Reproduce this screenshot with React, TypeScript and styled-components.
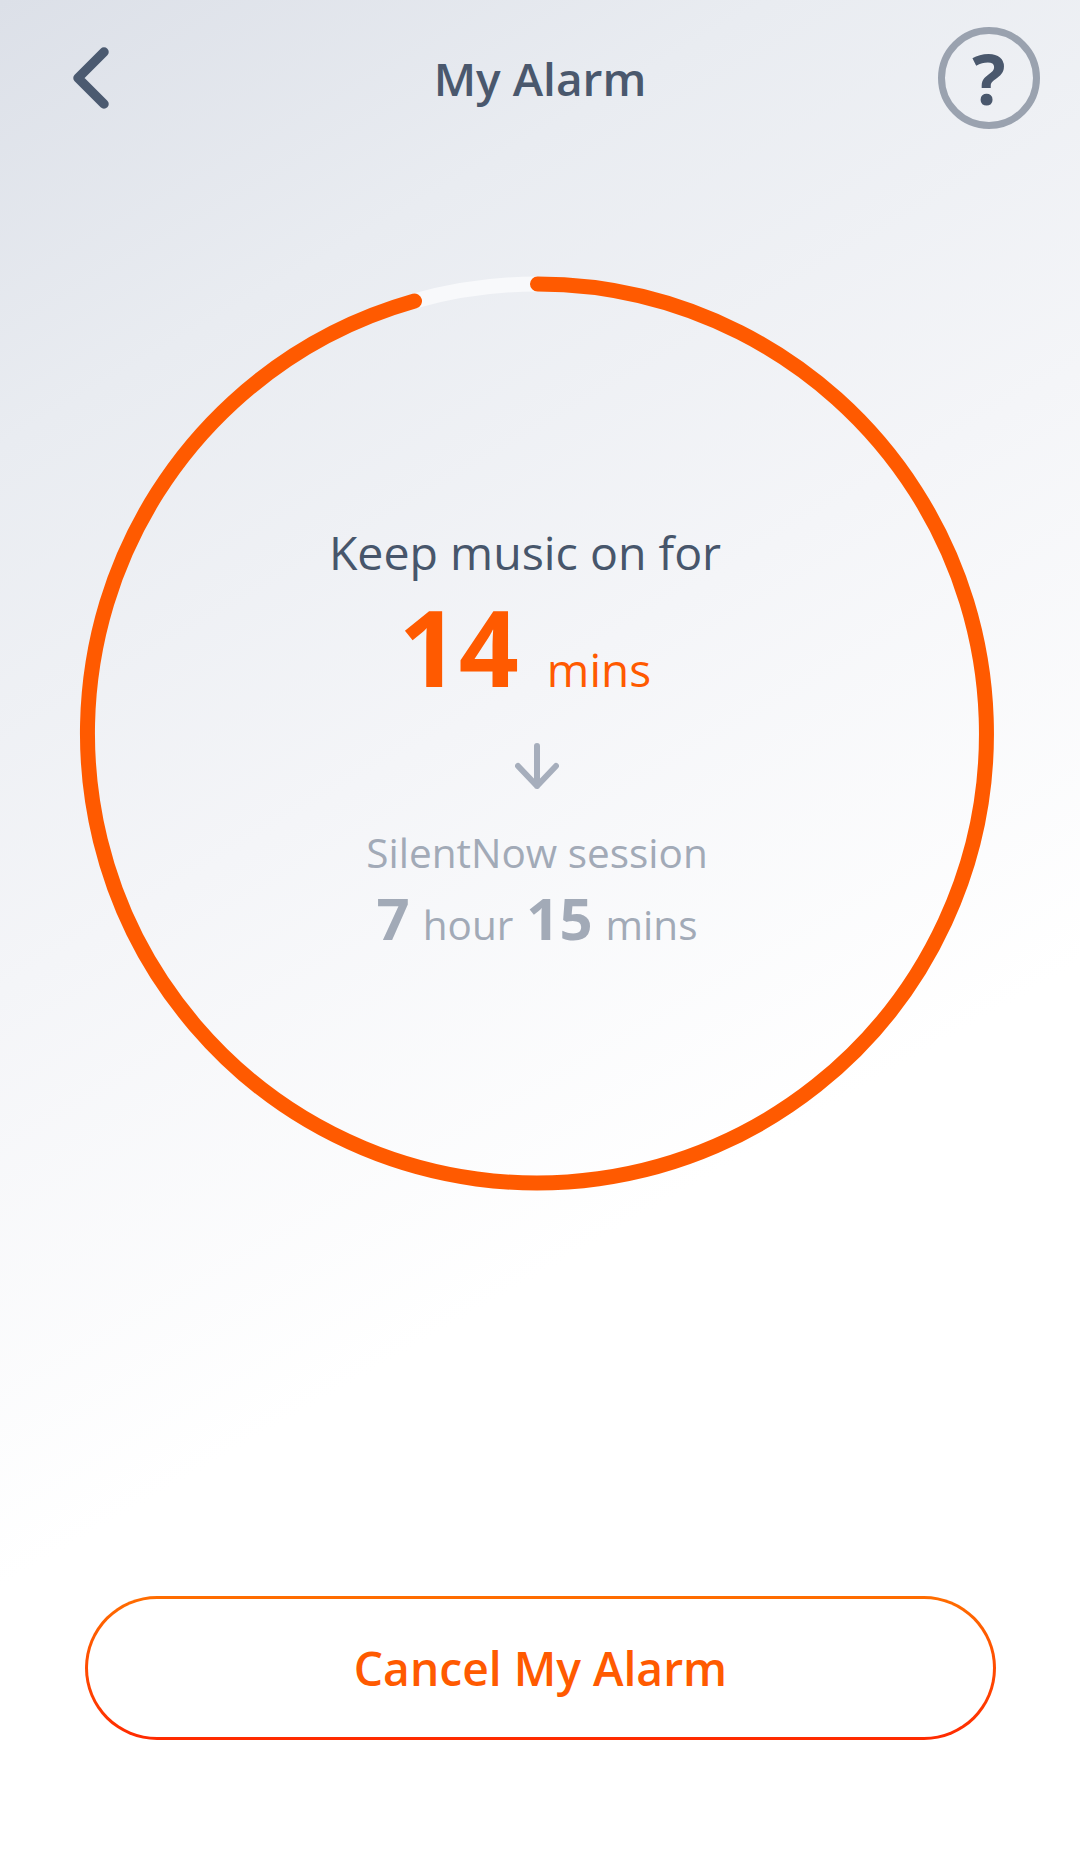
import React from "react";
import styled, { createGlobalStyle } from "styled-components";

const Global = createGlobalStyle`
  html, body { margin: 0; padding: 0; background: #fff; }
  #root { width: 1080px; }
`;

const Page = styled.div`
  width: 1080px;
  height: 1856px;
  box-sizing: border-box;
  overflow: hidden;
  font-family: "Open Sans", "Noto Sans", sans-serif;
  background: linear-gradient(150deg, #dce0e8 0%, #e9ecf1 18%, #f4f5f8 40%, #ffffff 64%);
`;

const Header = styled.header`
  display: grid;
  grid-template-columns: 1fr auto 1fr;
  align-items: center;
  padding: 27px 40px 0 72px;
  height: 102px;
`;

const BackButton = styled.div`
  justify-self: start;
  width: 38px;
  height: 62px;
  color: #4b5a70;
`;

const Title = styled.h1`
  margin: 0 32px 0 0;
  font-size: 46px;
  line-height: 60px;
  font-weight: 600;
  color: #4a586d;
`;

const HelpButton = styled.div`
  justify-self: end;
  width: 102px;
  height: 102px;
  box-sizing: border-box;
  border: 7px solid #9aa2af;
  border-radius: 50%;
  display: flex;
  align-items: center;
  justify-content: center;
  font-size: 70px;
  line-height: 1;
  font-weight: 700;
  color: #4a586d;
`;

const RingArea = styled.section`
  display: grid;
  width: 920px;
  height: 920px;
  margin: 144px 0 0 77px;
`;

const RingArt = styled.svg`
  grid-area: 1 / 1;
  width: 920px;
  height: 920px;
`;

const RingContent = styled.div`
  grid-area: 1 / 1;
  display: flex;
  flex-direction: column;
  align-items: center;
  padding-top: 248px;
`;

const Lead = styled.div`
  font-size: 46.5px;
  line-height: 62px;
  color: #47566b;
  margin-right: 24px;
`;

const Countdown = styled.div`
  display: flex;
  align-items: baseline;
  gap: 28px;
  color: #ff5a00;
  margin: 3px 24px 0 0;
  height: 122px;
`;

const BigNumber = styled.span`
  font-size: 105px;
  line-height: 122px;
  font-weight: 700;
`;

const BigUnit = styled.span`
  font-size: 46px;
`;

const Arrow = styled.svg`
  width: 44px;
  height: 46px;
  margin-top: 35px;
  color: #a6aebc;
`;

const SessionLabel = styled.div`
  margin-top: 38px;
  font-size: 40.5px;
  line-height: 52px;
  font-weight: 400;
  color: #a2aab7;
`;

const SessionTime = styled.div`
  display: flex;
  align-items: baseline;
  gap: 13px;
  margin-top: 6px;
  color: #a2aab7;
`;

const SessionNumber = styled.span`
  font-size: 58px;
  line-height: 66px;
  font-weight: 700;
`;

const SessionUnit = styled.span`
  font-size: 40.5px;
`;

const CancelButton = styled.button`
  display: block;
  width: 911px;
  height: 144px;
  margin: 403px 0 0 85px;
  box-sizing: border-box;
  border: 3px solid transparent;
  border-radius: 72px;
  background:
    linear-gradient(#fff, #fff) padding-box,
    linear-gradient(180deg, #ff6d00, #ff2a00) border-box;
  font-family: inherit;
  font-size: 46.2px;
  font-weight: 600;
  color: #ff5a00;
  padding: 0;
`;

export default function App() {
  return (
    <Page>
      <Global />
      <Header>
        <BackButton>
          <svg width="38" height="62" viewBox="0 0 38 62" fill="none">
            <path d="M32 5 L6 31 L32 57" stroke="currentColor" strokeWidth="9.5" strokeLinecap="round" strokeLinejoin="round" />
          </svg>
        </BackButton>
        <Title>My Alarm</Title>
        <HelpButton>?</HelpButton>
      </Header>
      <RingArea>
        <RingArt viewBox="0 0 920 920" fill="none">
          <path d="M460.5 11 A449.5 449.5 0 0 0 337.5 28" stroke="#f8f9fb" strokeWidth="15" />
          <path d="M460.5 11 A449.5 449.5 0 1 1 337.5 28" stroke="#ff5a00" strokeWidth="15" strokeLinecap="round" />
        </RingArt>
        <RingContent>
          <Lead>Keep music on for</Lead>
          <Countdown>
            <BigNumber>14</BigNumber>
            <BigUnit>mins</BigUnit>
          </Countdown>
          <Arrow viewBox="0 0 44 46" fill="none">
            <path d="M22 3 V43 M3 23 L22 43 L41 23" stroke="currentColor" strokeWidth="6" strokeLinecap="round" strokeLinejoin="round" />
          </Arrow>
          <SessionLabel>SilentNow session</SessionLabel>
          <SessionTime>
            <SessionNumber>7</SessionNumber>
            <SessionUnit>hour</SessionUnit>
            <SessionNumber>15</SessionNumber>
            <SessionUnit>mins</SessionUnit>
          </SessionTime>
        </RingContent>
      </RingArea>
      <CancelButton>Cancel My Alarm</CancelButton>
    </Page>
  );
}
